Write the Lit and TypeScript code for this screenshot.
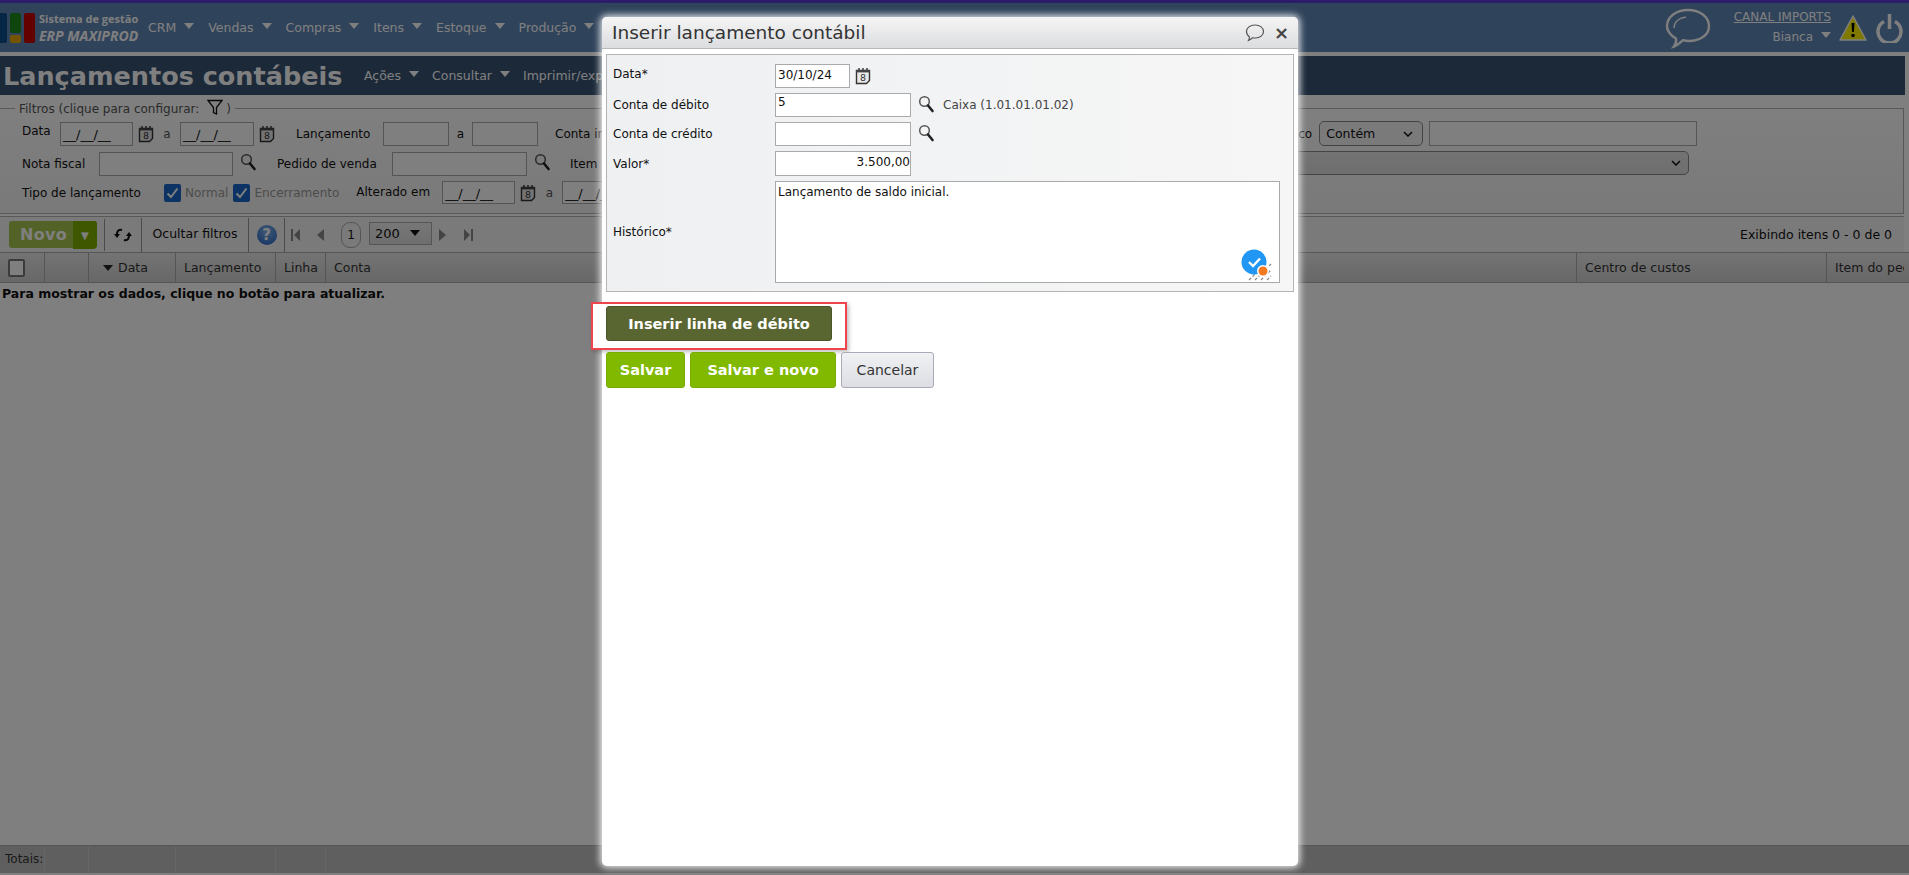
import { LitElement, html, css, svg } from "lit";
import { customElement } from "lit/decorators.js";

const cal = html`<svg class="cal" viewBox="0 0 16 18" width="16" height="18"><path d="M1.5 3.5h13v10l-3 3h-10z" fill="#e8e8e8" stroke="#333" stroke-width="1.4"/><path d="M4 1v4M8 1v4M12 1v4" stroke="#333" stroke-width="1.4"/><rect x="1" y="3" width="14" height="2.4" fill="#444"/><text x="8" y="14.4" font-size="9.5" text-anchor="middle" font-family="DejaVu Sans" fill="#333">8</text></svg>`;
const search = html`<svg class="search" viewBox="0 0 16 18" width="16" height="18"><circle cx="6.5" cy="6.5" r="4.8" fill="#f4f4f4" stroke="#555" stroke-width="1.5"/><path d="M10 10.5l4.5 5.5" stroke="#222" stroke-width="2.6" stroke-linecap="round"/></svg>`;
const caret = html`<i class="caret"></i>`;
const menu = ["CRM", "Vendas", "Compras", "Itens", "Estoque", "Produção"];
const cols = [
  { w: 45, t: "" },
  { w: 44, t: "" },
  { w: 87, t: "Data", sort: true },
  { w: 100, t: "Lançamento" },
  { w: 50, t: "Linha" },
  { w: 1251, t: "Conta" },
  { w: 250, t: "Centro de custos" },
  { w: 77, t: "Item do pedido" },
];
const totals = [45, 44, 87, 100, 50];

@customElement("app-root")
export class AppRoot extends LitElement {
  static styles = css`
    :host { display: block; position: relative; width: 1909px; height: 875px; overflow: hidden; background: #fff; font-family: "DejaVu Sans", sans-serif; font-size: 12px; color: #111; }
    * { box-sizing: border-box; }
    .top { height: 52px; background: #5f86b6; border-top: 3px solid #5a38d8; display: flex; align-items: center; padding-right: 6px; color: #fff; }
    .logo { display: flex; gap: 3px; width: 40px; height: 30px; margin-left: -4px; align-items: stretch; }
    .logo i { display: block; width: 11px; border-radius: 2px; }
    .lb { background: #0d4c8c; } .lr { background: #c60000; }
    .lm { display: flex; flex-direction: column; gap: 2px; width: 11px; }
    .lm b { display: block; flex: 1; border-radius: 2px; } .lg { background: #1a8a1a; flex: 2.6 !important; } .ly { background: #eaa800; }
    .brand { margin-left: 3px; width: 105px; color: #fff; line-height: 17px; }
    .brand div { font-size: 11px; font-weight: bold; font-family: "Open Sans", sans-serif; white-space: nowrap; }
    .brand em { font-size: 14px; font-weight: bold; font-family: "Open Sans", sans-serif; white-space: nowrap; }
    .menu { display: flex; margin-left: 4px; }
    .menu span { display: flex; align-items: flex-start; }
    .mi { font-size: 12.5px; margin-right: 14px; white-space: nowrap; display: flex; align-items: center; }
    .caret { display: inline-block; width: 0; height: 0; border: 5px solid transparent; border-top: 6px solid #fff; border-bottom: 0; margin: -4px 0 0 8px; }
    .tr { margin-left: auto; display: flex; align-items: center; }
    .who { text-align: right; width: 108px; margin: 0 8px 0 12px; line-height: 20px; }
    .who a { text-decoration: underline; display: block; font-size: 12px; white-space: nowrap; margin-top: -1px; }
    .who div { display: flex; justify-content: flex-end; align-items: center; }
    .power { margin-left: 9px; }
    .strip { height: 4px; background: #fff; }
    .title { height: 39px; background: #365272; display: flex; align-items: center; color: #fff; padding-left: 3px; margin-right: 4px; }
    .title h1 { margin: 0; font-size: 25.5px; font-weight: bold; width: 361px; white-space: nowrap; }
    .title .mi { font-size: 12.5px; margin-right: 13px; }
    .filters { margin: 13px 5px 0 0; height: 106px; border: 1px solid #b0b0b0; border-left: 0; position: relative; background: linear-gradient(#ffffff, #f3f3f3); }
    .legend { position: absolute; left: 15px; top: -9px; background: #fff; padding: 0 4px; color: #555; display: flex; align-items: center; height: 18px; white-space: nowrap; }
    .legend svg { margin: -4px 3px 0 8px; }
    .row { position: absolute; left: 0; right: 0; display: flex; align-items: center; height: 25px; white-space: nowrap; }
    .r1 { top: 12px; } .r2 { top: 42px; } .r3 { top: 71px; }
    .inp { height: 24px; border: 1px solid #aaa; background: #fff; display: block; flex: none; padding: 3px; font-size: 12px; overflow: hidden; }
    .mask { padding: 0 2px; color: #111; font-size: 13px; letter-spacing: 0; line-height: 23px; }
    .lbl { flex: none; }
    .l1 { margin-left: 22px; width: 38px; margin-top: -5px; } .w73 { width: 73px; } .w74 { width: 74px; } .w66 { width: 66px; } .w134 { width: 134px; } .w135 { width: 135px; }
    .cal { flex: none; margin-left: 5px; }
    .search { flex: none; margin: -3px 0 0 7px; }
    .a { flex: none; width: 26px; text-align: center; color: #555; }
    .a1 { width: 23px; text-align: center; }
    .l2 { margin-left: 21px; width: 87px; }
    .a2 { width: 19px; text-align: center; color: #555; }
    .l3 { margin-left: 17px; }
    .l4 { margin-left: 22px; width: 77px; }
    .l5 { margin-left: 21px; width: 115px; }
    .l6 { margin-left: 20px; }
    .l7 { margin-left: 22px; width: 142px; }
    .chk { flex: none; width: 17px; height: 18px; border-radius: 2px; background: #1a66c8; display: flex; align-items: center; justify-content: center; }
    .chklbl { color: #999; margin: 0 5px 0 4px; flex: none; }
    .l8 { margin-left: 12px; width: 86px; margin-top: -2px; }
    .w73b { width: 73px; height: 23px; }
    .rightgrp { position: absolute; display: flex; align-items: center; }
    .g1 { right: 206px; left: 1290px; }
    .g2 { right: 214px; left: 1100px; top: 55px; }
    .sel { flex: none; height: 25px; border: 1px solid #888; border-radius: 5px; background: #f4f4f4; display: flex; align-items: center; justify-content: space-between; padding: 0 9px 0 6px; font-size: 12.5px; }
    .s1 { width: 104px; margin: 0 6px 0 7px; }
    .s1x { flex: 1; height: 25px; }
    .s2 { flex: 1; height: 24px; justify-content: flex-end; background: linear-gradient(#e6e6e6, #dedede); padding-right: 7px; }
    .tools { margin: 2px 5px 0 0; height: 36px; border-top: 1px solid #b0b0b0; display: flex; align-items: center; background: #f5f5f5; position: relative; }
    .novo { flex: none; margin-left: 9px; display: flex; width: 88px; height: 27px; border-radius: 3px; background: #a4c94c; color: #fff; font-weight: bold; font-size: 16px; position: relative; letter-spacing: .3px; background: #b9cf73; align-items: center; background: #bed27a; }
    .novo { background: #a6c44e; }
    .novo span { width: 64px; padding-left: 11px; }
    .novo b { position: absolute; left: 64px; top: 0; width: 24px; height: 28px; background: #7fb000; border-radius: 0 3px 4px 0; display: flex; align-items: center; justify-content: center; font-size: 10px; }
    .tsep { flex: none; height: 34px; border-left: 1px solid #999; }
    .tb { flex: none; display: flex; align-items: center; justify-content: center; }
    .t1 { width: 37px; margin-left: 7px; border-left: 1px solid #999; height: 32px; }
    .t2 { width: 107px; border-left: 1px solid #999; height: 34px; padding-bottom: 2px; font-size: 12.5px; }
    .t3 { width: 37px; border-left: 1px solid #999; height: 34px; border-right: 1px solid #999; }
    .help { width: 20px; height: 20px; border-radius: 50%; background: radial-gradient(circle at 50% 30%, #7fb2ee, #2060c0); color: #fff; font-weight: bold; font-size: 15px; display: flex; align-items: center; justify-content: center; }
    .nav { flex: none; margin-left: 6px; }
    .pg { flex: none; width: 20px; height: 26px; border: 1px solid #aaa; border-radius: 9px; margin: 0 8px 0 17px; display: flex; align-items: center; justify-content: center; }
    .psel { flex: none; width: 63px; height: 23px; border: 1px solid #aaa; margin-top: -3px; background: linear-gradient(#eee, #ddd); display: flex; justify-content: space-between; align-items: center; padding: 0 11px 0 5px; font-size: 13px; }
    .psel i { width: 0; height: 0; border: 5px solid transparent; border-top: 6px solid #111; border-bottom: 0; }
    .count { margin-left: auto; margin-right: 12px; font-size: 12.5px; white-space: nowrap; }
    .thead { display: flex; height: 31px; border-top: 1px solid #aaa; border-bottom: 1px solid #aaa; background: linear-gradient(#e8e8e8, #cfcfcf); margin-right: 0; white-space: nowrap; color: #333; overflow: hidden; }
    .th { flex: none; border-right: 1px solid #aaa; display: flex; align-items: center; padding-left: 8px; font-size: 12.5px; overflow: hidden; }
    .th:nth-child(8) { border-right: 0; }
    .box { width: 17px; height: 18px; border: 2px solid #777; border-radius: 2px; background: #fff; }
    .sort { width: 0; height: 0; border: 5px solid transparent; border-top: 6px solid #222; border-bottom: 0; margin: 1px 5px 0 6px; }
    .empty { font-weight: bold; padding-left: 2px; line-height: 21px; font-size: 12.5px; }
    .totals { position: absolute; left: 0; right: 0; top: 845px; height: 28px; background: #bebebe; border-top: 1px solid #aaa; display: flex; color: #333; }
    .totals div { flex: none; border-right: 1px solid #ccc; line-height: 27px; padding-left: 5px; overflow: visible; white-space: nowrap; }
    .veil { position: absolute; inset: 0; background: rgba(0,0,0,.5); }
    .topin { position: absolute; left: 1087px; top: 14px; width: 153px; height: 20px; background: #fff; }
    .modal { position: absolute; left: 602px; top: 17px; width: 696px; height: 849px; background: #fff; border-radius: 5px; box-shadow: 0 0 7px 2px rgba(255,255,255,.85); display: flex; flex-direction: column; color: #111; }
    .mh { height: 32px; flex: none; background: linear-gradient(#f5f5f5, #dcdde0); border-radius: 5px 5px 0 0; border-bottom: 1px solid #b8b8b8; display: flex; align-items: center; padding: 0 9px 0 10px; }
    .mh h2 { margin: 0; font-size: 18.5px; font-weight: normal; color: #333; white-space: nowrap; }
    .mh svg { margin-left: auto; }
    .x { font-weight: bold; font-size: 18px; color: #444; margin-left: 9px; line-height: 1; }
    .panel { margin: 5px 4px 0; height: 238px; flex: none; border: 1px solid #b4b4b4; background: linear-gradient(90deg, #eef0f2, #f6f6f6); padding: 9px 13px 0 6px; display: grid; grid-template-columns: 162px 1fr; grid-auto-rows: min-content; row-gap: 5px; align-items: center; }
    .panel .inp { background: #fff; }
    .pline { display: flex; align-items: center; }
    .dl { margin-top: -4px; }
    .panel .i73 { width: 75px; height: 24px; padding: 3px 2px; }
    .panel .i135 { width: 136px; height: 24px; padding: 1px 2px; }
    .panel .r { text-align: right; padding: 3px 0 0; height: 25px; }
    .desc { color: #444; margin-left: 9px; font-size: 12px; }
    .ta { width: 505px; height: 102px; border: 1px solid #aaa; background: #fff; padding: 3px 2px; position: relative; }
    .badge { position: absolute; right: 6px; bottom: 1px; width: 32px; height: 32px; }
    .btnrow { display: flex; gap: 5px; margin: 0 0 0 4px; }
    .highlight { margin: 10px 0 2px -11px; flex: none; align-self: flex-start; border: 2px solid #f0444c; padding: 2px 11px 8px 13px; width: 256px; height: 48px; box-shadow: 2px 2px 4px rgba(0,0,0,.25); background: #fff; }
    .btn { border-radius: 3px; font-weight: bold; color: #fff; font-size: 14.5px; display: flex; align-items: center; justify-content: center; white-space: nowrap; flex: none; }
    .ins { width: 226px; height: 35px; background: #5a6631; border: 1px solid #4a552a; }
    .sv { height: 36px; background: #80b900; border: 1px solid #78ad00; }
    .s79 { width: 79px; } .s146 { width: 146px; }
    .can { width: 93px; height: 36px; font-weight: normal; color: #333; background: linear-gradient(#f0f1f3, #dcdee3); border: 1px solid #aab; font-size: 14px; }
  `;

  render() {
    return html`
      <div class="top">
        <div class="logo"><i class="lb"></i><span class="lm"><b class="lg"></b><b class="ly"></b></span><i class="lr"></i></div>
        <div class="brand"><div>Sistema de gestão</div><em>ERP MAXIPROD</em></div>
        <div class="menu">${menu.map((m) => html`<div class="mi">${m}${caret}</div>`)}</div>
        <div class="tr">
          <svg width="46" height="42" viewBox="0 0 46 42" fill="none" stroke="#fff" stroke-width="2.4"><path d="M23 3c11.500 0 21 6.500 21 16s-9.500 15-20 15c-3 0-5-.5-6-.8C15 36 12 38.500 9 39.500c1.500-2 2.500-5 2-8C5 28 2 24 2 19 2 9.500 11.500 3 23 3z"/><path d="M9 21c0-6 5-10 12-11" stroke-width="1.400"/></svg>
          <div class="who"><a>CANAL IMPORTS</a><div>Bianca${caret}</div></div>
          <svg width="28" height="26" viewBox="0 0 28 26"><path d="M14 1L27 25H1z" fill="#fff200" stroke="#fff" stroke-width="1.500" stroke-linejoin="round"/><path d="M12.500 8h3l-.6 9h-1.800z" fill="#000"/><circle cx="14" cy="20.500" r="1.800" fill="#000"/></svg>
          <svg class="power" width="27" height="30" viewBox="0 0 27 30" fill="none" stroke="#fff" stroke-width="3.500"><path d="M8 8.500a11.500 11.500 0 1 0 11 0"/><path d="M13.500 1v15"/></svg>
        </div>
      </div>
      <div class="strip"></div>
      <div class="title"><h1>Lançamentos contábeis</h1>
        <div class="mi">Ações${caret}</div><div class="mi">Consultar${caret}</div><div class="mi">Imprimir/exportar${caret}</div>
      </div>
      <div class="filters">
        <div class="legend">Filtros (clique para configurar:
          <svg width="16" height="17" viewBox="0 0 16 17" fill="none" stroke="#111" stroke-width="1.300"><path d="M1 1.500h14l-5.500 7v6.500l-3-1.500v-5z"/></svg>)</div>
        <div class="row r1">
          <span class="lbl l1">Data</span><span class="inp mask w73">__/__/__</span>${cal}
          <span class="a">a</span><span class="inp mask w74">__/__/__</span>${cal}
          <span class="lbl l3" style="margin-left:21px;width:87px">Lançamento</span><span class="inp w66"></span>
          <span class="a1">a</span><span class="inp w66"></span>
          <span class="lbl l3">Conta inicial</span>
          <div class="rightgrp g1"><span class="lbl">rico</span><span class="sel s1">Contém <svg width="10" height="6" viewBox="0 0 10 6" fill="none" stroke="#111" stroke-width="1.500"><path d="M1 1l4 4 4-4"/></svg></span><span class="inp s1x"></span></div>
        </div>
        <div class="row r2">
          <span class="lbl l4">Nota fiscal</span><span class="inp w134"></span>${search}
          <span class="lbl l5">Pedido de venda</span><span class="inp w135"></span>${search}
          <span class="lbl l6">Item</span>
          <div class="rightgrp g2" style="top:0"><span class="sel s2"><svg width="10" height="6" viewBox="0 0 10 6" fill="none" stroke="#111" stroke-width="1.500"><path d="M1 1l4 4 4-4"/></svg></span></div>
        </div>
        <div class="row r3">
          <span class="lbl l7">Tipo de lançamento</span>
          <span class="chk"><svg width="13" height="12" viewBox="0 0 13 12" fill="none" stroke="#fff" stroke-width="2"><path d="M1.500 6.500l3.500 3.500 6.500-8.500"/></svg></span><span class="chklbl">Normal</span>
          <span class="chk"><svg width="13" height="12" viewBox="0 0 13 12" fill="none" stroke="#fff" stroke-width="2"><path d="M1.500 6.500l3.500 3.500 6.500-8.500"/></svg></span><span class="chklbl">Encerramento</span>
          <span class="lbl l8">Alterado em</span><span class="inp mask w73b">__/__/__</span>${cal}
          <span class="a">a</span><span class="inp mask w73b">__/__/__</span>
        </div>
      </div>
      <div class="tools">
        <div class="novo"><span>Novo</span><b>▼</b></div>
        <div class="tb t1"><svg width="18" height="16" viewBox="0 0 18 16" fill="none" stroke="#111" stroke-width="2"><path d="M8 3C4 2 2.500 5 3 9"/><path d="M0 7l3 4 3-4" fill="#111" stroke="none"/><path d="M10 13c4 1 5.500-2 5-6"/><path d="M12 9l3-4 3 4" fill="#111" stroke="none"/></svg></div>
        <div class="tb t2">Ocultar filtros</div>
        <div class="tb t3"><span class="help">?</span></div>
        <svg class="nav" width="10" height="14" viewBox="0 0 10 14" fill="#888"><rect x="0" y="1" width="2" height="12"/><path d="M9 1v12L3 7z"/></svg>
        <svg class="nav" style="margin-left:16px" width="7" height="14" viewBox="0 0 7 14" fill="#888"><path d="M7 1v12L0 7z"/></svg>
        <div class="pg">1</div>
        <div class="psel">200<i></i></div>
        <svg class="nav" style="margin-left:7px" width="7" height="14" viewBox="0 0 7 14" fill="#888"><path d="M0 1v12l7-6z"/></svg>
        <svg class="nav" style="margin-left:17px" width="10" height="14" viewBox="0 0 10 14" fill="#888"><path d="M1 1v12l6-6z"/><rect x="8" y="1" width="2" height="12"/></svg>
        <div class="count">Exibindo itens 0 - 0 de 0</div>
      </div>
      <div class="thead">
        ${cols.map((c, i) => html`<div class="th" style="width:${c.w}px">${i === 0 ? html`<span class="box"></span>` : ""}${c.sort ? html`<i class="sort"></i>` : ""}${c.t}</div>`)}
      </div>
      <div class="empty">Para mostrar os dados, clique no botão para atualizar.</div>
      <div class="totals">${totals.map((w, i) => html`<div style="width:${w}px">${i === 0 ? "Totais:" : ""}</div>`)}</div>
      <div class="veil"></div>
      <div class="topin" style="display:none"></div>
      <div class="modal">
        <div class="mh"><h2>Inserir lançamento contábil</h2>
          <svg width="20" height="20" viewBox="0 0 20 20" fill="none" stroke="#555" stroke-width="1.200"><path d="M10 2c5 0 8.500 2.800 8.500 6.500S15 15 10.500 15c-1 0-2 0-2.800-.3C6.500 16 5 17 3.500 17.500c.8-1.200 1-2.600.8-3.800C2.500 12.500 1.500 10.700 1.500 8.500 1.500 4.800 5 2 10 2z"/></svg>
          <span class="x">×</span></div>
        <div class="panel">
          <span class="dl">Data*</span><div class="pline"><span class="inp i73">30/10/24</span>${cal}</div>
          <span>Conta de débito</span><div class="pline"><span class="inp i135">5</span>${search}<span class="desc">Caixa (1.01.01.01.02)</span></div>
          <span>Conta de crédito</span><div class="pline"><span class="inp i135"></span>${search}</div>
          <span>Valor*</span><div class="pline"><span class="inp i135 r">3.500,00</span></div>
          <span>Histórico*</span><div class="ta">Lançamento de saldo inicial.
            <svg class="badge" viewBox="0 0 32 32"><path d="M14 31l16-16M20 31l10-10M26 31l4-4M8 31l16-16" stroke="#888" stroke-width="1.300" stroke-dasharray="3 2" fill="none"/><circle cx="13" cy="13" r="12.500" fill="#2196f3"/><path d="M8 13l4 4 7-7.500" fill="none" stroke="#fff" stroke-width="2.300"/><circle cx="22" cy="22" r="6" fill="#fff"/><circle cx="22" cy="22" r="4.500" fill="#f47a20"/></svg>
          </div>
        </div>
        <div class="highlight"><div class="btn ins">Inserir linha de débito</div></div>
        <div class="btnrow">
          <div class="btn sv s79">Salvar</div><div class="btn sv s146">Salvar e novo</div><div class="btn can">Cancelar</div>
        </div>
      </div>
    `;
  }
}
